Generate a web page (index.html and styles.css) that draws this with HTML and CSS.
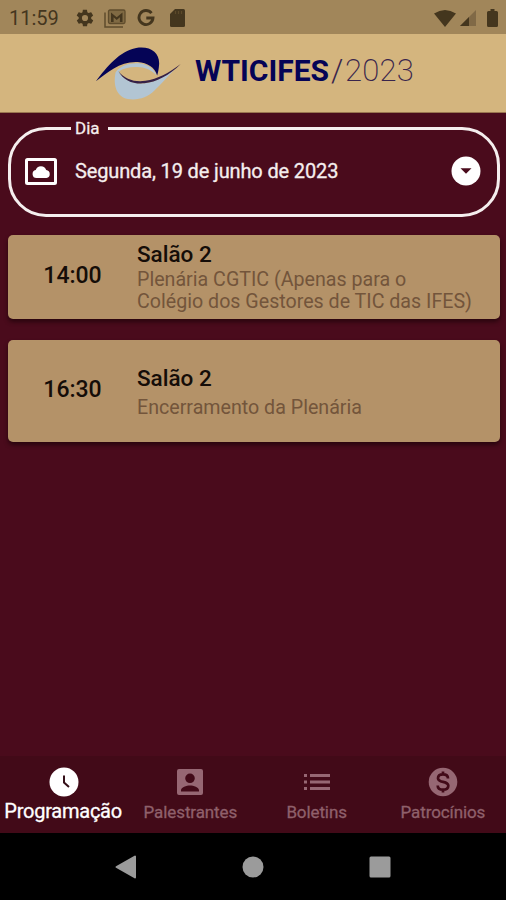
FILE: index.html
```
<!DOCTYPE html>
<html lang="pt-BR">
<head>
<meta charset="utf-8">
<meta name="viewport" content="width=device-width">
<title>WTICIFES 2023</title>
<link rel="stylesheet" href="styles.css">
</head>
<body>
<div class="status">
  <span class="clock">11:59</span>
  <svg class="s-gear" width="20" height="20" viewBox="0 0 24 24"><path d="M19.4 13c0-.3.1-.6.1-1s0-.7-.1-1l2.100-1.600c.2-.2.3-.4.1-.6l-2-3.500c-.1-.2-.4-.3-.6-.2l-2.500 1c-.5-.4-1.100-.7-1.700-1l-.4-2.600c0-.3-.2-.5-.5-.5h-4c-.3 0-.5.200-.5.4L9 5.100c-.6.300-1.200.6-1.700 1l-2.500-1c-.2-.1-.5 0-.6.2l-2 3.500c-.1.200-.1.500.1.600L4.500 11c0 .3-.1.600-.1 1s0 .7.1 1l-2.100 1.600c-.2.200-.3.400-.1.600l2 3.500c.1.200.4.300.6.200l2.500-1c.5.400 1.100.7 1.700 1l.4 2.600c0 .3.200.5.500.5h4c.3 0 .5-.2.500-.4l.4-2.700c.6-.3 1.200-.6 1.700-1l2.500 1c.2.100.5 0 .6-.2l2-3.500c.1-.2.100-.5-.1-.6zM12 15.700a3.700 3.700 0 1 1 0-7.400 3.700 3.700 0 0 1 0 7.400z" fill-rule="evenodd"/></svg>
  <svg class="s-mail" width="22" height="19" viewBox="0 0 22 19"><path d="M1 3.500V18h18" fill="none" stroke="#5f4c2c" stroke-width="1.500"/><rect x="4.500" y="1" width="16.500" height="13.500" rx="1.500" fill="#806a43" stroke="#5f4c2c" stroke-width="1.300"/><path d="M7 13V3.500l5.700 4.700 5.800-4.700V13h-2.600V8.300l-3.200 2.600-3.100-2.600V13z"/></svg>
  <svg class="s-google" width="18" height="18" viewBox="0 0 18 18"><path d="M14.500 4.200A7 7 0 1 0 16 9H9.300" fill="none" stroke="#44361e" stroke-width="2.900"/></svg>
  <svg class="s-sd" width="15" height="18" viewBox="0 0 15 18"><path d="M5 0h8.500Q15 0 15 1.500v15Q15 18 13.500 18h-12Q0 18 0 16.500V5z"/><path d="M5.500 2v3M8.500 2v3M11.500 2v3" stroke="#5c4a2a" stroke-width="1.200"/></svg>
  <span class="grow"></span>
  <svg width="22" height="17" viewBox="0 0 22 17"><path d="M11 17 0 3.500Q11-3.500 22 3.500z"/></svg>
  <svg class="s-signal" width="16" height="16" viewBox="0 0 16 16"><path d="M16 0v16H0z" fill="#806946"/><path d="M9 7v9H0z"/></svg>
  <svg class="s-battery" width="11" height="18" viewBox="0 0 11 18"><path d="M3.500 0h4v2H9.500Q11 2 11 3.500v13Q11 18 9.500 18h-8Q0 18 0 16.500v-13Q0 2 1.500 2h2z"/></svg>
</div>
<header class="brand">
  <svg class="logo" width="87" height="54" viewBox="29 31 264 165">
    <path d="M91 108C106 88 133 79 162 81C190 84 209 98 217 119C205 105 187 95 166 93C139 90 116 95 101 106C111 126 132 139 158 142C197 146 233 128 274 96C251 121 231 143 209 165C188 187 156 195 128 190C93 182 83 147 91 108z" fill="#b2c5d3"/>
    <path d="M31 136C64 91 103 44 154 34C198 27 226 49 224 84C223 98 221 109 218 118C211 93 188 79 159 77C106 74 66 108 31 136z" fill="#050456"/>
    <path d="M99 104C119 130 151 139 182 134C220 129 252 111 290 83C254 119 215 138 179 142C144 145 116 134 99 104z" fill="#342047"/>
  </svg>
  <span class="word"><b>WTICIFES</b><i>/</i><span>2023</span></span>
</header>
<main>
  <fieldset class="day">
    <legend>Dia</legend>
    <svg class="d-cloud" width="32" height="28" viewBox="0 0 32 28"><rect x="1.500" y="1.500" width="29" height="24" rx="1" fill="none" stroke="#fff" stroke-width="3"/><path d="M11.500 20a4 4 0 0 1-.8-7.900 5.500 5.500 0 0 1 10.500 0A4 4 0 0 1 21.500 20z" fill="#fff"/></svg>
    <span class="date">Segunda, 19 de junho de 2023</span>
    <svg class="d-drop" width="30" height="30" viewBox="0 0 30 30"><circle cx="15" cy="15" r="14.500" fill="#fff"/><path d="M9.500 12.200h11L15 17.800z" fill="#4a0b1c"/></svg>
  </fieldset>
  <article class="card short">
    <time>14:00</time>
    <div class="info"><h2>Salão 2</h2><p>Plenária CGTIC (Apenas para o<br>Colégio dos Gestores de TIC das IFES)</p></div>
  </article>
  <article class="card tall">
    <time>16:30</time>
    <div class="info"><h2>Salão 2</h2><p>Encerramento da Plenária</p></div>
  </article>
</main>
<nav class="tabs">
  <a class="on"><svg width="30" height="30" viewBox="0 0 30 30"><circle cx="15" cy="15" r="14.500"/><path d="M15 8.500v7l5 4.500" fill="none" stroke="#351019" stroke-width="2"/></svg><span>Programação</span></a>
  <a><svg width="30" height="30" viewBox="0 0 30 30"><path fill-rule="evenodd" d="M4 2h22q2 0 2 2v22q0 2-2 2H4q-2 0-2-2V4q0-2 2-2zm11 4.500a4.800 4.800 0 1 0 0 9.600 4.800 4.800 0 0 0 0-9.600zM6 24.500h18v-1.300c0-3.200-5.500-4.800-9-4.800s-9 1.600-9 4.800z"/></svg><span>Palestrantes</span></a>
  <a><svg width="30" height="30" viewBox="0 0 30 30"><path d="M2 7h3v3H2zm6 0h20v3H8zM2 13.500h3v3H2zm6 0h20v3H8zM2 20h3v3H2zm6 0h20v3H8z"/></svg><span>Boletins</span></a>
  <a><svg width="30" height="30" viewBox="0 0 30 30"><circle cx="15" cy="15" r="14.300"/><path d="M20 11.500C20 8.700 17.800 7.400 15 7.400S10 8.800 10 11.200C10 16.300 20.300 13.500 20.300 18.800C20.300 21.500 18 22.700 15 22.700S9.700 21.200 9.700 18.400M15 4.500v3M15 22.500v3" fill="none" stroke="#420a18" stroke-width="2.700"/></svg><span>Patrocínios</span></a>
</nav>
<footer class="system">
  <svg width="22" height="24" viewBox="0 0 22 24"><path d="M20 1.500v21L1.500 12z" stroke="#9b9b9b" stroke-width="2" stroke-linejoin="round"/></svg>
  <svg width="22" height="22" viewBox="0 0 22 22"><circle cx="11" cy="11" r="10.500"/></svg>
  <svg width="22" height="22" viewBox="0 0 22 22"><rect x=".5" y=".5" width="21" height="21" rx="1.500"/></svg>
</footer>
</body>
</html>
```
FILE: styles.css
```
* { box-sizing: border-box; }
body {
  margin: 0;
  width: 506px;
  height: 900px;
  display: flex;
  flex-direction: column;
  overflow: hidden;
  background: #4a0b1c;
  font-family: Roboto, "Liberation Sans", sans-serif;
}
svg { display: block; flex: none; }
.status {
  height: 34px;
  flex: none;
  display: flex;
  align-items: center;
  padding: 2px 8px 0 9px;
  background: #a1865a;
  color: #44361e;
  fill: #44361e;
}
.clock { width: 66px; font-size: 20px; }
.s-mail { margin-left: 9px; }
.s-google { margin-left: 11px; }
.s-sd { margin-left: 15px; }
.grow { flex: 1; }
.s-signal { margin-left: 4px; }
.s-battery { margin-left: 11px; }
.brand {
  height: 79px;
  flex: none;
  display: flex;
  padding: 12px 0 0 95px;
  background: #d4b57e;
  border-bottom: 1px solid #9a7650;
  color: #050456;
}
.logo { margin-top: 1px; }
.word {
  display: flex;
  margin: 7px 0 0 13px;
  font-size: 31px;
  line-height: 36px;
  white-space: nowrap;
}
.word b { width: 136px; font-weight: 700; font-size: 30px; }
.word i { width: 14px; font-style: normal; font-weight: 300; color: #39254c; }
.word span { font-weight: 200; color: #39254c; letter-spacing: 0.2px; }
main { flex: 1; padding: 5px 6px 0 8px; }
.day {
  height: 99px;
  margin: 0;
  padding: 0 16px 11px 14px;
  border: 3px solid #f5eeee;
  border-radius: 38px;
  display: flex;
  align-items: center;
  color: #f5eeee;
}
.day legend { margin-left: 46px; padding: 0 8px 0 4px; font-size: 17px; line-height: 20px; -webkit-text-stroke: 0.3px; }
.d-cloud { margin-top: 3px; }
.date { margin-left: 18px; font-size: 20px; letter-spacing: -0.14px; flex: 1; white-space: nowrap; -webkit-text-stroke: 0.3px; }
.card {
  display: flex;
  align-items: center;
  border-radius: 5px;
  background: #b49268;
  box-shadow: 0 3px 4px rgba(20, 0, 5, 0.6);
}
.short { height: 84px; margin-top: 18px; }
.tall { height: 102px; margin-top: 21px; }
time { width: 129px; padding-bottom: 4px; text-align: center; font-size: 23px; font-weight: 500; color: #150d08; }
.info { padding-top: 2px; }
h2 { margin: 0; font-size: 22.500px; line-height: 25px; font-weight: 500; color: #150d08; }
p { margin: 0; font-size: 19.650px; line-height: 22px; color: #73553b; white-space: nowrap; }
.short p { margin-top: 2px; margin-bottom: 1px; }
.tall .info { padding-top: 3px; }
.tall p { margin-top: 6px; }
.tabs {
  height: 77px;
  flex: none;
  display: grid;
  grid-template-columns: repeat(4, 1fr);
  padding-left: 1px;
  background: #420a18;
  color: #8f606b;
  fill: #966773;
}
.tabs a { display: flex; flex-direction: column; align-items: center; padding-top: 11px; }
.tabs span { font-size: 17px; line-height: 20px; margin-top: 5px; letter-spacing: -0.1px; -webkit-text-stroke: 0.3px; }
.tabs .on { color: #fff; fill: #fff; }
.tabs .on span { font-size: 20px; margin-top: 4px; margin-right: 2px; letter-spacing: -0.25px; }
.system {
  height: 67px;
  flex: none;
  display: flex;
  align-items: center;
  justify-content: center;
  gap: 105px;
  background: #000;
  fill: #9b9b9b;
}
```
